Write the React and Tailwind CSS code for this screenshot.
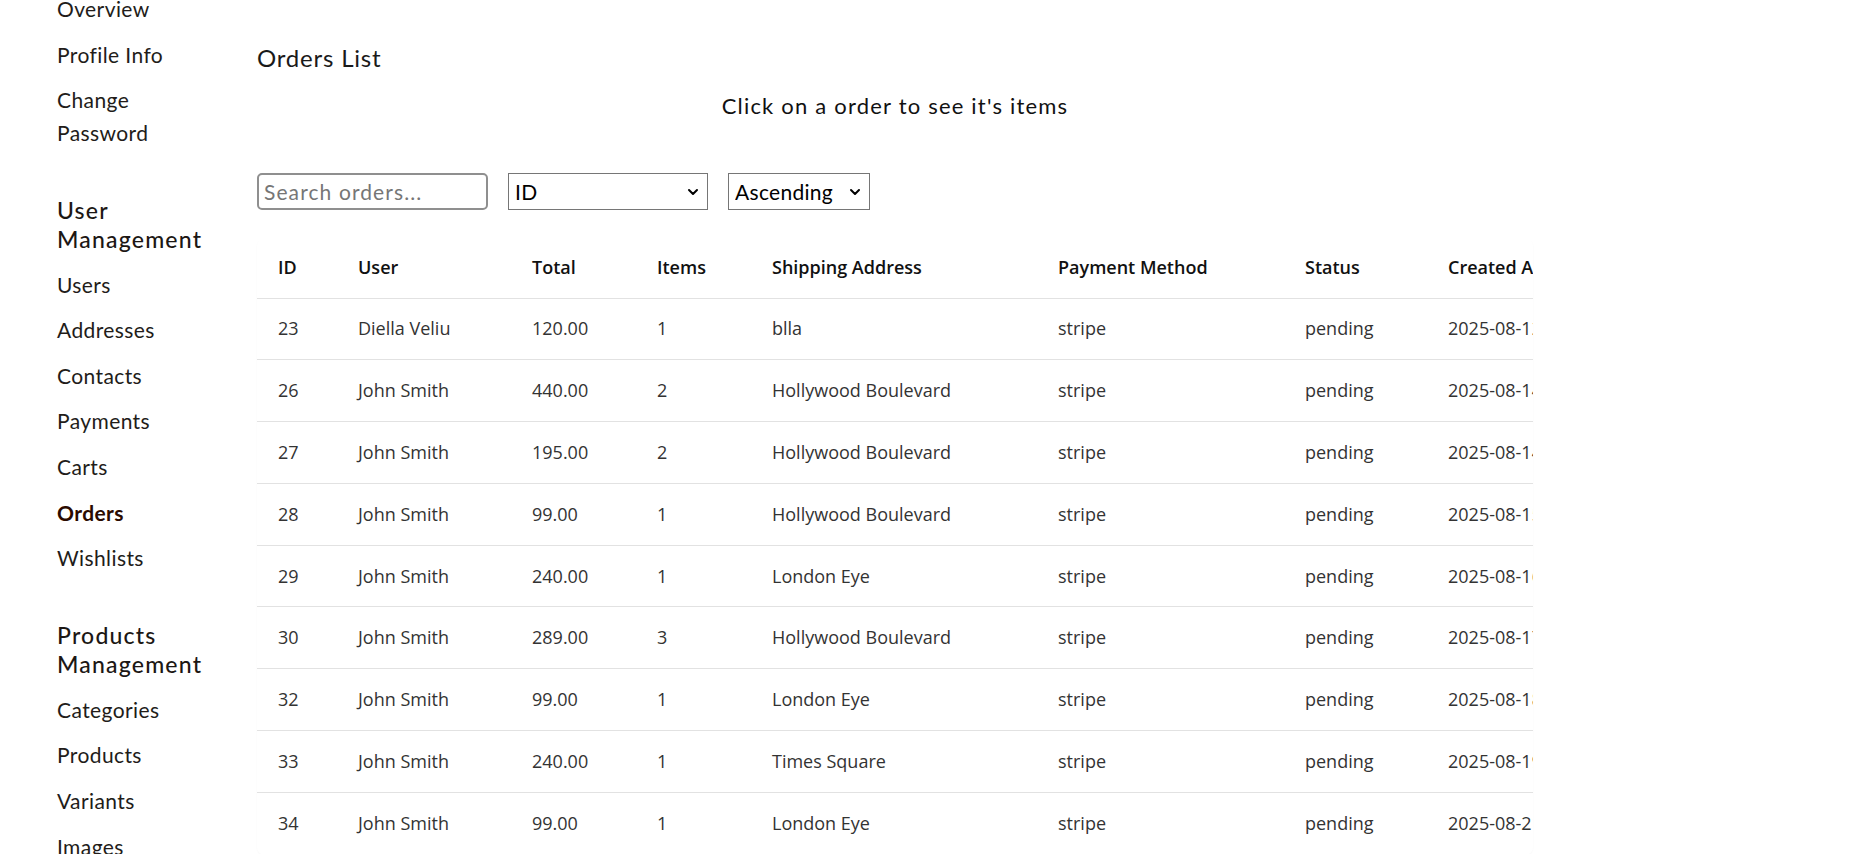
import { ChevronDown } from "lucide-react";

const sections = [
  {
    title: null,
    items: ["Overview", "Profile Info", "Change Password"],
  },
  {
    title: "User Management",
    items: ["Users", "Addresses", "Contacts", "Payments", "Carts", "Orders", "Wishlists"],
  },
  {
    title: "Products Management",
    items: ["Categories", "Products", "Variants", "Images", "Reviews"],
  },
];

const columns = [
  { label: "ID", width: "w-[80px]" },
  { label: "User", width: "w-[174px]" },
  { label: "Total", width: "w-[125px]" },
  { label: "Items", width: "w-[115px]" },
  { label: "Shipping Address", width: "w-[286px]" },
  { label: "Payment Method", width: "w-[247px]" },
  { label: "Status", width: "w-[143px]" },
  { label: "Created At", width: "w-[210px]" },
  { label: "Actions", width: "w-[140px]" },
];

const orders = [
  [23, "Diella Veliu", "120.00", 1, "blla", "2025-08-12 10:41"],
  [26, "John Smith", "440.00", 2, "Hollywood Boulevard", "2025-08-14 09:12"],
  [27, "John Smith", "195.00", 2, "Hollywood Boulevard", "2025-08-14 09:30"],
  [28, "John Smith", "99.00", 1, "Hollywood Boulevard", "2025-08-15 16:05"],
  [29, "John Smith", "240.00", 1, "London Eye", "2025-08-16 11:48"],
  [30, "John Smith", "289.00", 3, "Hollywood Boulevard", "2025-08-17 13:20"],
  [32, "John Smith", "99.00", 1, "London Eye", "2025-08-18 08:54"],
  [33, "John Smith", "240.00", 1, "Times Square", "2025-08-19 19:02"],
  [34, "John Smith", "99.00", 1, "London Eye", "2025-08-21 12:37"],
];

const Sidebar = () => (
  <aside className="w-[257px] shrink-0 pl-[57px] -mt-[8px] text-[#221c19] font-['Lato',sans-serif]">
    {sections.map((section, i) => (
      <div key={i} className={i === 0 ? "" : "mt-[46.5px]"}>
        {section.title && (
          <h3 className="text-[23px] leading-[29px] font-medium tracking-[1.2px] text-[#1c1714] w-[170px]">
            {section.title}
          </h3>
        )}
        <ul className={`flex flex-col gap-[12.6px] ${section.title ? "mt-[14px]" : ""}`}>
          {section.items.map((item) => (
            <li
              key={item}
              className={`text-[21px] leading-[33px] tracking-[0.4px] w-[120px] ${
                item === "Orders" ? "font-bold text-[#2b0a00]" : ""
              }`}
            >
              {item}
            </li>
          ))}
        </ul>
      </div>
    ))}
  </aside>
);

const SelectBox = ({ value, width }) => (
  <div className={`relative ${width} h-[37px]`}>
    <select
      defaultValue={value}
      className="appearance-none w-full h-full border border-[#767676] bg-white pl-[6px] pr-6 text-[21px] tracking-[0.3px] text-black font-['Lato',sans-serif] outline-none"
    >
      <option>{value}</option>
    </select>
    <ChevronDown
      size={16}
      strokeWidth={3}
      className="absolute right-[7px] top-1/2 -translate-y-1/2 pointer-events-none text-black"
    />
  </div>
);

const App = () => {
  return (
    <div className="min-h-screen bg-white flex overflow-hidden">
      <Sidebar />

      <main className="w-[1276px] pt-[42px] font-['Lato',sans-serif]">
        <h2 className="text-[24px] leading-[32px] tracking-[0.8px] text-[#1a1a1a]">Orders List</h2>
        <p className="mt-[18px] text-center text-[22px] leading-[28px] tracking-[1.2px] text-[#111]">
          Click on a order to see it's items
        </p>

        <div className="mt-[53px] flex items-center gap-5">
          <input
            type="text"
            placeholder="Search orders..."
            className="w-[231px] h-[37px] border-2 border-[#8f8f8f] rounded-[5px] pl-[5px] text-[21px] tracking-[1.1px] placeholder:text-[#767676] outline-none"
          />
          <SelectBox value="ID" width="w-[200px]" />
          <SelectBox value="Ascending" width="w-[142px]" />
        </div>

        <div className="mt-[28px] overflow-x-auto rounded-lg shadow-[0_1px_2px_rgba(0,0,0,0.035)] bg-white">
          <table className="table-fixed border-collapse w-[1520px] font-['Open_Sans',sans-serif] text-[18px]">
            <thead>
              <tr>
                {columns.map((c) => (
                  <th
                    key={c.label}
                    className={`${c.width} h-[60px] pl-[21px] text-left font-semibold text-[#111] border-b border-[#e2e2e2] whitespace-nowrap`}
                  >
                    {c.label}
                  </th>
                ))}
              </tr>
            </thead>
            <tbody className="text-[#333]">
              {orders.map(([id, user, total, items, address, created]) => (
                <tr key={id} className="cursor-pointer hover:bg-gray-50">
                  {[id, user, total, items, address, "stripe", "pending", created, "View"].map((v, j) => (
                    <td
                      key={j}
                      className="h-[61.8px] pl-[21px] border-b border-[#e2e2e2] whitespace-nowrap"
                    >
                      {v}
                    </td>
                  ))}
                </tr>
              ))}
            </tbody>
          </table>
        </div>
      </main>
    </div>
  );
};

export default App;
